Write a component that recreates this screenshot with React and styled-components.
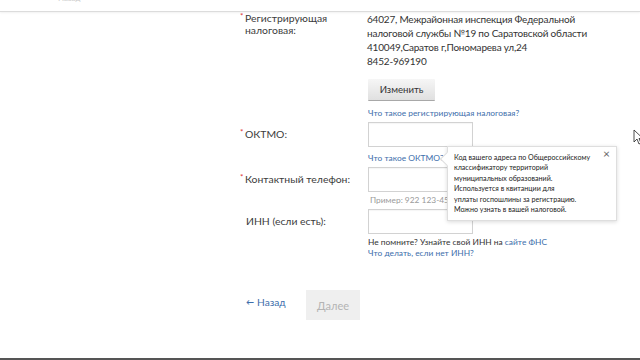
import React from "react";
import styled, { createGlobalStyle } from "styled-components";

const Global = createGlobalStyle`
  html, body { margin: 0; padding: 0; background: #fff; }
  body { font-family: Lato, "Noto Sans", sans-serif; color: #333; }
  #root { width: 640px; height: 360px; overflow: hidden; position: relative; }
`;

const Page = styled.div`
  width: 640px;
  height: 360px;
  display: flex;
  flex-direction: column;
  position: relative;
  background: #fff;
`;

const TopBar = styled.div`
  height: 11px;
  border-bottom: 1px solid #dcdcdc;
  box-shadow: 0 1px 2px rgba(0,0,0,0.06);
  overflow: hidden;
  position: relative;
`;

const TopCut = styled.span`
  position: absolute;
  left: 58px;
  top: -6px;
  font-size: 8px;
  line-height: 8px;
  color: #ccc;
`;

const Form = styled.div`
  flex: 1;
  padding: 0 0 0 240px;
  position: relative;
`;

const Row = styled.div`
  display: grid;
  grid-template-columns: 128px 1fr;
  align-items: ${p => (p.$top ? "start" : "center")};
  margin-top: ${p => p.$mt || 0}px;
`;

const Label = styled.div`
  font-size: 10.4px;
  line-height: 11.5px;
  color: #3c3c3c;
  padding-left: ${p => (p.$noStar ? "6px" : "0")};
  padding-top: ${p => p.$pt || 0}px;
  display: flex;
`;

const Star = styled.span`
  color: #d33;
  font-size: 8px;
  line-height: 8px;
  width: 5px;
  flex: none;
  margin-top: -1px;
`;

const Address = styled.div`
  font-size: 10px;
  letter-spacing: -0.2px;
  line-height: 14px;
  color: #333;
  margin-left: -1px;
`;

const Cell = styled.div`
  display: flex;
  flex-direction: column;
  align-items: flex-start;
`;

const GrayButton = styled.button`
  margin-top: 11px;
  width: 67px;
  height: 22px;
  border: none;
  border-bottom: 1px solid #a8a8a8;
  border-radius: 1px;
  background: linear-gradient(#f6f6f6, #e0e0e0);
  font-family: inherit;
  font-size: 9.6px;
  color: #333;
  padding: 0;
`;

const Link = styled.a`
  color: #3d6eab;
  font-size: 8.4px;
  line-height: 11px;
  text-decoration: none;
  margin-top: ${p => p.$mt || 0}px;
  display: block;
`;

const InlineLink = styled.span`
  color: #3d6eab;
`;

const Hint = styled.div`
  font-size: 8.4px;
  line-height: 11px;
  color: ${p => (p.$dark ? "#333" : "#999")};
  margin-top: ${p => p.$mt || 0}px;
  margin-left: ${p => p.$ml || 0}px;
`;

const Input = styled.div`
  width: 103px;
  height: 23px;
  border: 1px solid #d2d2d2;
  box-shadow: inset 0 1px 1px rgba(0,0,0,0.04);
  background: #fff;
`;

const Footer = styled.div`
  display: flex;
  align-items: center;
  margin-top: 31px;
`;

const Back = styled.a`
  width: 66px;
  padding-left: 6px;
  margin-bottom: 6px;
  box-sizing: border-box;
  color: #3d6eab;
  font-size: 10.2px;
  text-decoration: none;
  display: flex;
  align-items: center;
  gap: 3px;
`;

const Arrow = styled.span`
  font-size: 8px;
  font-weight: 700;
`;

const Next = styled.button`
  width: 54px;
  height: 30px;
  border: none;
  background: #efefef;
  color: #b4b4b4;
  font-family: inherit;
  font-size: 11px;
  padding: 0;
`;

const Popover = styled.div`
  position: absolute;
  left: 447px;
  top: 134px;
  width: 170px;
  height: 75px;
  box-sizing: border-box;
  background: #fff;
  border: 1px solid #dedede;
  box-shadow: 0 1px 4px rgba(0,0,0,0.15);
  padding: 6px 10px 0 6px;
  font-size: 7.1px;
  line-height: 10.4px;
  white-space: nowrap;
  color: #222;
  &::before {
    content: "";
    position: absolute;
    left: -6px;
    top: 7px;
    width: 9px;
    height: 9px;
    background: #fff;
    border-left: 1px solid #dedede;
    border-bottom: 1px solid #dedede;
    transform: rotate(45deg);
  }
`;

const Close = styled.span`
  position: absolute;
  right: 6px;
  top: 2px;
  font-size: 12px;
  color: #666;
`;

const BottomBar = styled.div`
  height: 2px;
  background: #555;
`;

const Cursor = styled.svg`
  position: absolute;
  left: 633px;
  top: 129px;
`;

export default function App() {
  return (
    <>
      <Global />
      <Page>
        <TopBar><TopCut>Назад</TopCut></TopBar>
        <Form>
          <Row $top>
            <Label $pt={1}><Star>*</Star><span>Регистрирующая<br />налоговая:</span></Label>
            <Cell>
              <Address>
                64027, Межрайонная инспекция Федеральной<br />
                налоговой службы №19 по Саратовской области<br />
                410049,Саратов г,Пономарева ул,24<br />
                8452-969190
              </Address>
              <GrayButton>Изменить</GrayButton>
              <Link $mt={7}>Что такое регистрирующая налоговая?</Link>
            </Cell>
          </Row>
          <Row $mt={3}>
            <Label><Star>*</Star><span>ОКТМО:</span></Label>
            <Input />
          </Row>
          <Row>
            <div />
            <Cell>
              <Link $mt={6}>Что такое ОКТМО?</Link>
            </Cell>
          </Row>
          <Row $mt={3}>
            <Label><Star>*</Star><span>Контактный телефон:</span></Label>
            <Input />
          </Row>
          <Row>
            <div />
            <Hint $mt={3} $ml={2}>Пример: 922 123-45-67</Hint>
          </Row>
          <Row $mt={3}>
            <Label $noStar><span>ИНН (если есть):</span></Label>
            <Input />
          </Row>
          <Row>
            <div />
            <Cell>
              <Hint $dark $mt={3}>Не помните? Узнайте свой ИНН на <InlineLink>сайте ФНС</InlineLink></Hint>
              <Link>Что делать, если нет ИНН?</Link>
            </Cell>
          </Row>
          <Footer>
            <Back><Arrow>&#8592;</Arrow><span>Назад</span></Back>
            <Next>Далее</Next>
          </Footer>
          <Popover>
            Код вашего адреса по Общероссийскому<br />
            классификатору территорий<br />
            муниципальных образований.<br />
            Используется в квитанции для<br />
            уплаты госпошлины за регистрацию.<br />
            Можно узнать в вашей налоговой.
            <Close>×</Close>
          </Popover>
        </Form>
        <BottomBar />
        <Cursor width="10" height="16" viewBox="0 0 10 16">
          <path d="M1 1 L1 13 L4 10 L6 15 L8 14 L6 9.5 L10 9.5 Z" fill="#fff" stroke="#222" strokeWidth="0.8" />
        </Cursor>
      </Page>
    </>
  );
}
